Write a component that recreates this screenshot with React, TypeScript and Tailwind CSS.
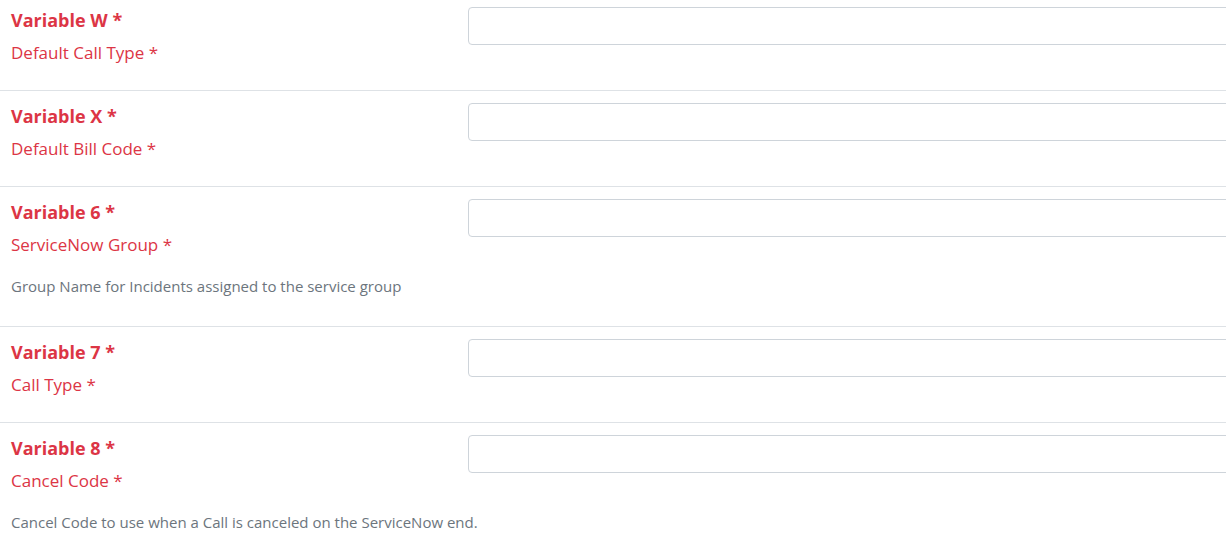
import React from 'react'

type Field = {
  id: string
  title: string
  label: string
  help?: string
}

const fields: Field[] = [
  { id: 'w', title: 'Variable W *', label: 'Default Call Type *' },
  { id: 'x', title: 'Variable X *', label: 'Default Bill Code *' },
  {
    id: '6',
    title: 'Variable 6 *',
    label: 'ServiceNow Group *',
    help: 'Group Name for Incidents assigned to the service group',
  },
  { id: '7', title: 'Variable 7 *', label: 'Call Type *' },
  {
    id: '8',
    title: 'Variable 8 *',
    label: 'Cancel Code *',
    help: 'Cancel Code to use when a Call is canceled on the ServiceNow end.',
  },
]

function FieldRow({ field }: { field: Field }) {
  return (
    <div className={'border-b border-[#dee2e6] pt-[12px] ' + (field.help ? 'pb-[29px]' : 'pb-[25px]')}>
      <div className="flex">
        <div className="w-[468px] shrink-0 pl-[11px]">
          <div className="text-[18px] leading-[27px] font-bold text-[#dc3545]">{field.title}</div>
          <label className="block mt-[7px] text-[17px] leading-[24px] text-[#dc3545]">{field.label}</label>
        </div>
        <div className="flex-1">
          <input
            type="text"
            className="block w-full h-[38px] rounded-[4px] border border-[#ced4da] bg-white px-3 outline-none"
          />
        </div>
      </div>
      {field.help && (
        <p className="mt-[19px] pl-[11px] whitespace-nowrap text-[15px] leading-[21px] text-[#6c757d]">{field.help}</p>
      )}
    </div>
  )
}

export default function App() {
  return (
    <div
      className="w-full h-[546px] overflow-hidden bg-white"
      style={{ fontFamily: '"Open Sans", "Noto Sans", sans-serif' }}
    >
      <div className="w-[1240px] -mt-[5px]">
        {fields.map(f => (
          <FieldRow key={f.id} field={f} />
        ))}
      </div>
    </div>
  )
}
